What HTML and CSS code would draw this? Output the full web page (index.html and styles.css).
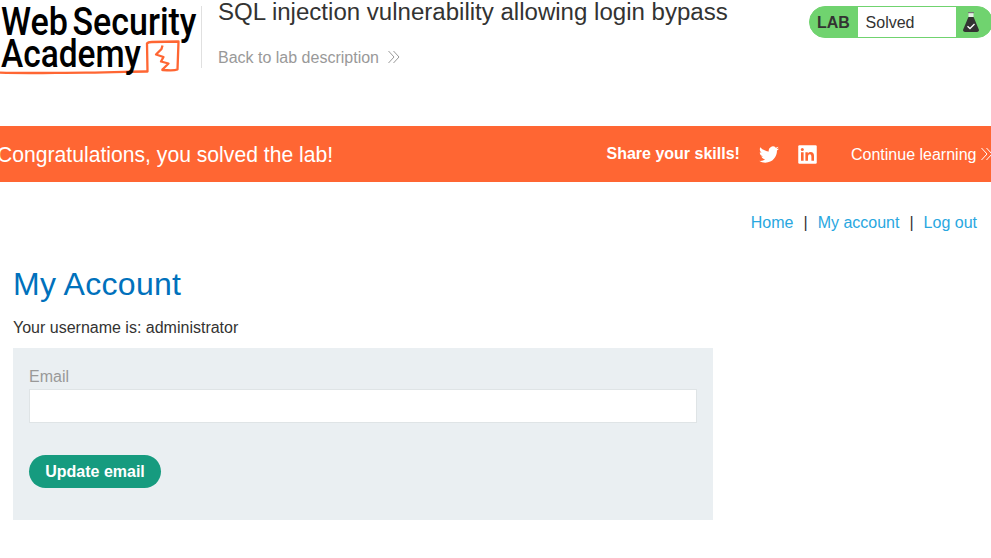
FILE: index.html
```html
<!DOCTYPE html>
<html lang="en">
<head>
<meta charset="utf-8">
<title>SQL injection vulnerability allowing login bypass</title>
<link rel="stylesheet" href="styles.css">
</head>
<body>
<header class="lab-header">
  <svg class="logo" width="201" height="80" viewBox="0 0 201 80" role="img" aria-label="Web Security Academy">
    <path class="logo-line" d="M0 72.6C30 73.6 55 72.6 86 72.6S130 71.4 147.500 71.500L147 43.500Q148 42 152 42L178.500 41.500L177.500 69.500Q174 71 163 70L161.500 69.800"/>
    <path class="logo-line" d="M162.500 45.500L161.500 49L156 54.500L163.500 57L161 61.500L168.500 63.500L162 70"/>
    <g class="logo-text">
      <text x="1" y="34.500" textLength="67" lengthAdjust="spacingAndGlyphs">Web</text>
      <text x="72.500" y="34.500" textLength="124" lengthAdjust="spacingAndGlyphs">Security</text>
      <text x="1" y="67.200" textLength="140" lengthAdjust="spacingAndGlyphs">Academy</text>
    </g>
  </svg>
  <div class="title">
    <h2>SQL injection vulnerability allowing login bypass</h2>
    <a class="back">Back to lab description
      <svg width="12" height="14" viewBox="0 0 12 14"><path d="M.5 1L6 7L.5 13M5.500 1L11 7L5.500 13"/></svg>
    </a>
  </div>
  <div class="status">
    <span class="lab">LAB</span>
    <span class="solved">Solved</span>
    <svg class="flask" width="16" height="21" viewBox="0 0 16 21">
      <path fill="#e4efe4" d="M5.500 1H10.500V5.500H5.500Z"/>
      <path fill="#777" d="M5 0H11V1.200H5Z"/>
      <path fill="#333332" d="M5.400 5H10.600L15.800 17.500Q16.200 20 14 20H2Q-.2 20 .2 17.500Z"/>
      <path fill="none" stroke="#fff" stroke-width="1.300" d="M4.500 14.200L7 16.500L11.500 12"/>
    </svg>
  </div>
</header>
<section class="banner">
  <h4>Congratulations, you solved the lab!</h4>
  <span class="share">Share your skills!</span>
  <svg class="twitter" width="20" height="18" viewBox="0 0 24 21"><path fill="#fff" d="M23.950 2.570a10 10 0 0 1-2.820.770 4.960 4.960 0 0 0 2.160-2.720c-.950.550-2 .950-3.130 1.180a4.920 4.920 0 0 0-8.380 4.480C7.690 6.090 4.070 4.130 1.640 1.160a4.820 4.820 0 0 0-.67 2.480c0 1.710.870 3.210 2.190 4.100a4.900 4.900 0 0 1-2.230-.62v.06a4.920 4.920 0 0 0 3.950 4.830 5 5 0 0 1-2.210.080 4.940 4.940 0 0 0 4.600 3.420A9.870 9.870 0 0 1 0 17.540a13.990 13.990 0 0 0 7.550 2.210c9.050 0 14-7.500 14-13.980q0-.31-.02-.63a9.940 9.940 0 0 0 2.460-2.550z"/></svg>
  <svg class="linkedin" width="19" height="19" viewBox="0 0 19 19"><rect width="18.500" height="18.500" x=".25" y=".25" rx="1.200" fill="#fff"/><g fill="#ff6633"><circle cx="4.300" cy="4.600" r="1.500"/><path d="M3 7.200H5.600V15.700H3ZM7.400 7.200H9.800V8.400Q10.700 7 12.600 7Q16 7 16 10.800V15.700H13.400V11.400Q13.400 9.200 11.800 9.200Q10 9.200 10 11.400V15.700H7.400Z"/></g></svg>
  <a class="continue">Continue learning
    <svg width="12" height="14" viewBox="0 0 12 14"><path d="M.5 1L6 7L.5 13M5.500 1L11 7L5.500 13"/></svg>
  </a>
</section>
<nav class="links"><a>Home</a><span>|</span><a>My account</a><span>|</span><a>Log out</a></nav>
<main>
  <h1>My Account</h1>
  <p>Your username is: administrator</p>
  <form>
    <label for="email">Email</label>
    <input id="email" type="text">
    <button type="button">Update email</button>
  </form>
</main>
</body>
</html>
```
FILE: styles.css
```css
* { box-sizing: border-box; }
body {
  margin: 0;
  height: 558px;
  overflow: hidden;
  background: #fff;
  color: #333332;
  font: 16px/20px "Liberation Sans", Arial, sans-serif;
}
h1, h2, h4, p { margin: 0; font-weight: 400; }
svg { display: block; flex: none; }

.lab-header { display: flex; height: 126px; }
.logo-text { font: 500 38px Roboto, sans-serif; fill: #000; }
.logo-line { fill: none; stroke: #ff6633; stroke-width: 2.3; stroke-linejoin: round; }
.title {
  display: flex;
  flex-direction: column;
  height: 62px;
  margin-top: 6px;
  padding-left: 16px;
  border-left: 1px solid #e0e0e0;
}
.title h2 { font-size: 24.05px; line-height: 28px; margin-top: -8px; white-space: nowrap; }
.back { display: flex; gap: 9px; align-items: center; margin-top: 22px; color: #999; }
.back svg { margin-top: -2px; }
.back svg path, .continue svg path { fill: none; stroke: currentColor; stroke-width: 1; }
.status {
  display: flex;
  flex: none;
  align-items: center;
  width: 184px;
  height: 32px;
  margin: 6px -2px 0 auto;
  border: 1px solid #70d36f;
  border-radius: 16px;
  background: #70d36f;
}
.lab { width: 48px; padding: 2px 0 0 7px; font-weight: 700; }
.solved { width: 98px; height: 30px; padding-left: 7.6px; background: #fff; line-height: 31px; }
.flask { margin-left: 7px; }

.banner {
  display: flex;
  align-items: center;
  height: 56px;
  padding-top: 1px;
  background: #ff6633;
  color: #fff;
  white-space: nowrap;
}
.banner h4 { width: 609.5px; margin-left: -3px; font-size: 21.15px; line-height: 24px; flex: none; }
.share { width: 152px; flex: none; margin-top: -2px; font-weight: 700; }
.linkedin { margin-left: 19.5px; }
.continue { display: flex; align-items: center; gap: 5px; margin-left: 34px; }
.continue svg { margin-top: -2px; }

.links { display: flex; justify-content: flex-end; gap: 10px; padding: 31px 14px 0 0; }
.links a { color: #29a7df; }

main { padding: 30px 13px 0; }
h1 { color: #0071bc; font-size: 32px; letter-spacing: .28px; line-height: 42px; }
main p { margin-top: 13px; }
form { width: 700px; height: 172px; margin-top: 10px; padding: 19px 16px; background: #eaeff2; }
label { display: block; color: #999; }
input { display: block; width: 668px; height: 34px; margin-top: 2px; border: 1px solid #dfe4e6; background: #fff; }
button {
  width: 132px;
  height: 33px;
  margin-top: 32px;
  padding: 0;
  border: 0;
  border-radius: 17px;
  background: #169b7f;
  color: #fff;
  font: 700 16px "Liberation Sans", Arial, sans-serif;
}
```
